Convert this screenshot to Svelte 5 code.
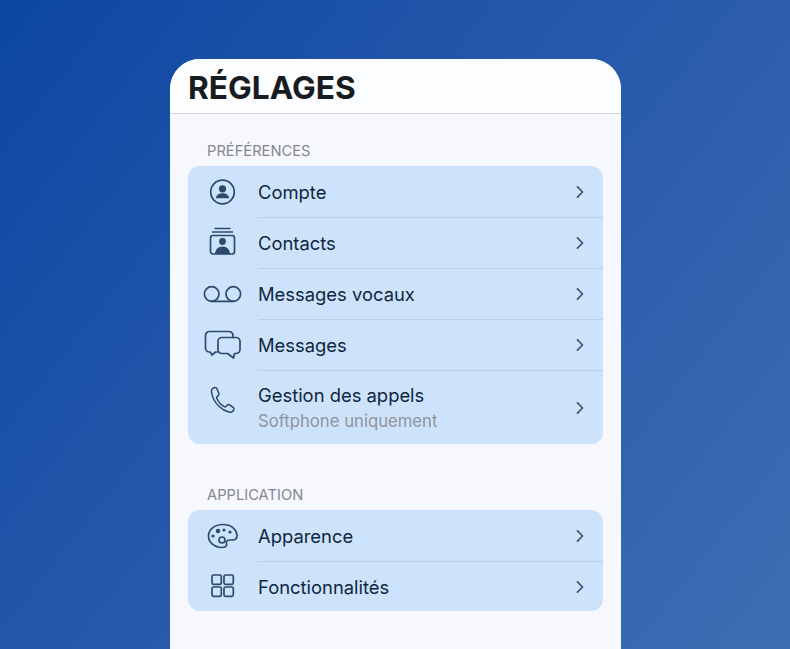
<script>
	const groups = [
		{
			title: "PRÉFÉRENCES",
			items: [
				{ icon: "account", label: "Compte" },
				{ icon: "contacts", label: "Contacts" },
				{ icon: "voicemail", label: "Messages vocaux" },
				{ icon: "messages", label: "Messages" },
				{ icon: "phone", label: "Gestion des appels", sub: "Softphone uniquement" }
			]
		},
		{
			title: "APPLICATION",
			items: [
				{ icon: "palette", label: "Apparence" },
				{ icon: "grid", label: "Fonctionnalités" }
			]
		}
	]
</script>

<div class="page">
	<main class="card">
		<header>
			<h1>RÉGLAGES</h1>
		</header>
		<div class="content">
			{#each groups as group}
				<section>
					<h2>{group.title}</h2>
					<ul>
						{#each group.items as item}
							<li class:tall={item.sub}>
								<span class="icon">
									<svg width="40" height="40" viewBox="0 0 40 40" fill="none" stroke="#2c4a6b" stroke-width="1.7" stroke-linecap="round" stroke-linejoin="round">
										{#if item.icon == "account"}
											<circle cx="19.500" cy="20" r="11.800" />
											<circle cx="19.500" cy="16.800" r="3.600" fill="#2c4a6b" stroke="none" />
											<path d="M12.800 26.200c.5-3.400 3-5 6.700-5s6.200 1.600 6.700 5z" fill="#2c4a6b" stroke="none" />
										{:else if item.icon == "contacts"}
											<path d="M12 5.500h15M9.500 9h20" stroke-width="1.400" />
											<rect x="7.500" y="12.500" width="24" height="18.500" rx="2.500" />
											<circle cx="19.500" cy="18.500" r="3.400" fill="#2c4a6b" stroke="none" />
											<path d="M12 31c.4-4.800 3.300-7.500 7.500-7.500S26.600 26.200 27 31z" fill="#2c4a6b" stroke="none" />
										{:else if item.icon == "voicemail"}
											<circle cx="8.700" cy="20" r="7.300" />
											<circle cx="30.300" cy="20" r="7.300" />
											<path d="M8.700 27.300h21.600" />
										{:else if item.icon == "messages"}
											<path d="M30 12.500v-2a4 4 0 0 0-4-4H6.500a4 4 0 0 0-4 4V23a4 4 0 0 0 4 4h.5l2 3 3.500-3H15" />
											<path d="M19 12.500h14a4 4 0 0 1 4 4v8a4 4 0 0 1-4 4h-1.500l-1 4.500-6-4.500H19a4 4 0 0 1-4-4v-8a4 4 0 0 1 4-4z" />
										{:else if item.icon == "phone"}
											<path transform="translate(-2 0)" d="M13.800 7.500c-2 .5-3.600 2.200-3.300 4.500.8 5.800 3.600 10.600 7.400 14.200 3 2.900 6.600 5 10 5.800 2.200.5 4.300-.6 5-2.500.3-.9.100-1.600-.7-2.200l-3.500-2.300c-.9-.6-1.800-.5-2.500.2l-1.300 1.300c-.5.500-1 .5-1.600.2-3.300-1.900-6-5-7.500-8.500-.3-.6-.2-1.100.3-1.600l1.200-1c.7-.7.900-1.500.5-2.400l-1.700-4.100c-.4-1.200-1.100-1.800-2.300-1.600z" stroke-width="1.500" />
										{:else if item.icon == "palette"}
											<path d="M20 8.500C11.500 8.500 5.500 13.500 5.500 20c0 6.500 6 11.500 13.500 11.500 3.800 0 5-1.700 4.500-3.800-.5-2.400.8-3.700 3.200-3.700h2.800c3 0 4.500-1.600 4.500-4.500C33.500 13 28 8.500 20 8.500z" />
											<circle cx="19" cy="24" r="3" />
											<circle cx="10" cy="20" r="1.600" fill="#2c4a6b" stroke="none" />
											<circle cx="15" cy="15" r="2.200" fill="#2c4a6b" stroke="none" />
											<circle cx="21" cy="14" r="1.600" fill="#2c4a6b" stroke="none" />
											<circle cx="27" cy="16" r="1.600" fill="#2c4a6b" stroke="none" />
										{:else if item.icon == "grid"}
											<rect x="9" y="9" width="9.300" height="9.300" rx="1.500" />
											<rect x="21" y="9" width="9.300" height="9.300" rx="1.500" />
											<rect x="9" y="21" width="9.300" height="9.300" rx="1.500" />
											<rect x="21" y="21" width="9.300" height="9.300" rx="1.500" />
										{/if}
									</svg>
								</span>
								<div class="row">
									<div class="text">
										<span class="label">{item.label}</span>
										{#if item.sub}
											<span class="sub">{item.sub}</span>
										{/if}
									</div>
									<svg class="chevron" width="10" height="14" viewBox="0 0 10 14" fill="none" stroke="#3f5873" stroke-width="1.800" stroke-linecap="round" stroke-linejoin="round">
										<path d="M2.500 1.800 7.500 7l-5 5.200" />
									</svg>
								</div>
							</li>
						{/each}
					</ul>
				</section>
			{/each}
		</div>
	</main>
</div>

<style>
	:global(body) {
		margin: 0;
	}

	.page {
		width: 790px;
		height: 649px;
		overflow: hidden;
		box-sizing: border-box;
		padding-top: 59px;
		background: linear-gradient(128deg, #0c47a4 0%, #2558aa 45%, #3f6db3 100%);
		font-family: Inter, "Liberation Sans", sans-serif;
	}

	.card {
		width: 451px;
		height: 590px;
		margin-left: 170px;
		background: #f6f8fe;
		border-radius: 30px 30px 0 0;
		overflow: hidden;
	}

	header {
		height: 55px;
		box-sizing: border-box;
		padding: 11px 18px 0;
		background: #fbfdff;
		border-bottom: 1px solid #d2d5da;
	}

	h1 {
		margin: 0;
		font-size: 31.7px;
		line-height: 36px;
		font-weight: 700;
		color: #181c20;
	}

	.content {
		padding: 28px 18px 0;
	}

	section {
		margin-bottom: 42px;
	}

	h2 {
		margin: 0 0 6px 19px;
		font-size: 14.7px;
		line-height: 18px;
		font-weight: 400;
		color: #84878c;
	}

	ul {
		list-style: none;
		margin: 0;
		padding: 1px 0 0;
		background: #cde3fc;
		border-radius: 12px;
	}

	li {
		display: flex;
		height: 51px;
	}

	li:last-child {
		height: 49px;
	}

	li.tall {
		height: 73px;
	}

	.icon {
		flex: none;
		width: 70px;
		display: flex;
		align-items: center;
		justify-content: center;
		padding-bottom: 1px;
	}

	li.tall .icon {
		align-items: flex-start;
		padding-top: 9px;
	}

	.row {
		flex: 1;
		display: flex;
		align-items: center;
		justify-content: space-between;
		padding-right: 18px;
		border-bottom: 1px solid #b9d2ec;
	}

	li:last-child .row {
		border-bottom: none;
	}

	.text {
		display: flex;
		flex-direction: column;
		gap: 5px;
	}

	.label {
		font-size: 18.4px;
		line-height: 22px;
		color: #0f2740;
	}

	.sub {
		font-size: 16.7px;
		line-height: 20px;
		color: #8f949b;
	}
</style>
